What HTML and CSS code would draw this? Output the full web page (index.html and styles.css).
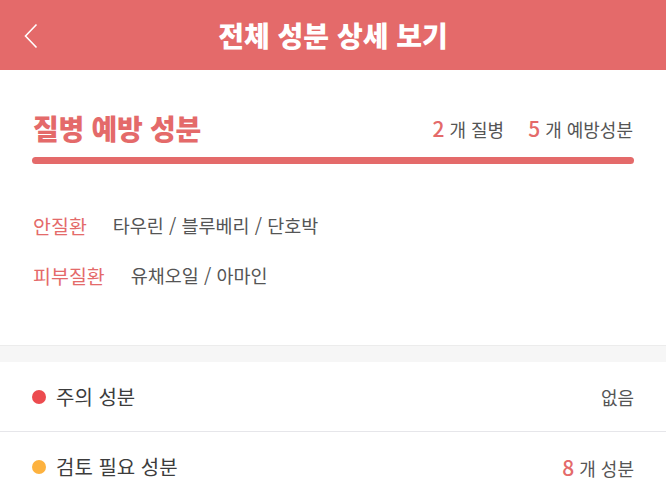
FILE: index.html
```html
<!DOCTYPE html>
<html lang="ko">
<head>
<meta charset="UTF-8" />
<meta name="viewport" content="width=device-width, initial-scale=1" />
<title>전체 성분 상세 보기</title>
<link rel="stylesheet" href="styles.css">
</head>
<body>

<header class="topbar">
  <a class="back" href="#">
    <svg width="14" height="26" viewBox="0 0 14 26"><path d="M12.5 1.5 L1.5 13 L12.5 24.5" fill="none" stroke="#fff" stroke-width="1.6"/></svg>
  </a>
  <h1>전체 성분 상세 보기</h1>
</header>

<section class="prevent">
  <div class="prevent-head">
    <h2>질병 예방 성분</h2>
    <div class="counts">
      <span><b>2</b> 개 질병</span>
      <span><b>5</b> 개 예방성분</span>
    </div>
  </div>
  <div class="bar"></div>
  <ul class="diseases">
    <li><span class="name">안질환</span> 타우린 / 블루베리 / 단호박</li>
    <li><span class="name">피부질환</span> 유채오일 / 아마인</li>
  </ul>
</section>

<div class="gap"></div>

<ul class="checks">
  <li>
    <span class="label"><i class="dot red"></i>주의 성분</span>
    <span class="value">없음</span>
  </li>
  <li>
    <span class="label"><i class="dot orange"></i>검토 필요 성분</span>
    <span class="value"><b>8</b> 개 성분</span>
  </li>
</ul>

</body>
</html>
```

FILE: styles.css
```css
:root {
  --accent: #e46a6a;
  --text: #4a4a4a;
  --line: #e6e6ea;
}
body {
  margin: 0;
  background: #fff;
  color: var(--text);
  font-family: "Noto Sans CJK KR", "Noto Sans", sans-serif;
}
.topbar {
  height: 70px;
  background: var(--accent);
  display: flex;
  align-items: center;
  justify-content: center;
  position: relative;
}
.topbar h1 {
  margin: 0;
  color: #fff;
  font-size: 28px;
  font-weight: 900;
  letter-spacing: 0;
}
.back {
  position: absolute;
  left: 24px;
  top: 23px;
  display: block;
}
.prevent {
  padding: 38px 32px 0;
  height: 237px;
  border-bottom: 1px solid #ececec;
}
.prevent-head {
  display: flex;
  justify-content: space-between;
  align-items: center;
  height: 40px;
}
.prevent-head h2 {
  margin: 0 0 0 1px;
  color: var(--accent);
  font-size: 28px;
  font-weight: 900;
  letter-spacing: -0.3px;
}
.counts {
  display: flex;
  gap: 24px;
  font-size: 18px;
  color: #555;
  margin-right: 1px;
}
.counts b, .value b {
  color: var(--accent);
  font-weight: 500;
  font-size: 21px;
}
.bar {
  height: 7px;
  border-radius: 4px;
  background: var(--accent);
  margin-top: 9px;
}
.diseases {
  list-style: none;
  margin: 36px 0 0;
  padding: 0;
}
.diseases li {
  display: flex;
  align-items: center;
  height: 50px;
  font-size: 18.5px;
  color: #555;
  margin-left: 1px;
}
.diseases .name {
  color: var(--accent);
  font-size: 19.5px;
  margin-right: 26px;
}
.gap {
  height: 16px;
  background: #f6f6f6;
}
.checks {
  list-style: none;
  margin: 0;
  padding: 0;
}
.checks li {
  height: 69px;
  display: flex;
  align-items: center;
  justify-content: space-between;
  padding: 0 32px;
  border-bottom: 1px solid var(--line);
  font-size: 19px;
}
.label {
  display: flex;
  align-items: center;
  color: #3c3c3c;
  font-size: 20px;
}
.dot {
  width: 14px;
  height: 14px;
  border-radius: 50%;
  margin-right: 10px;
}
.dot.red { background: #ec4b4f; }
.dot.orange { background: #fdb23f; }
.value {
  color: #555;
  font-size: 18px;
}
```
